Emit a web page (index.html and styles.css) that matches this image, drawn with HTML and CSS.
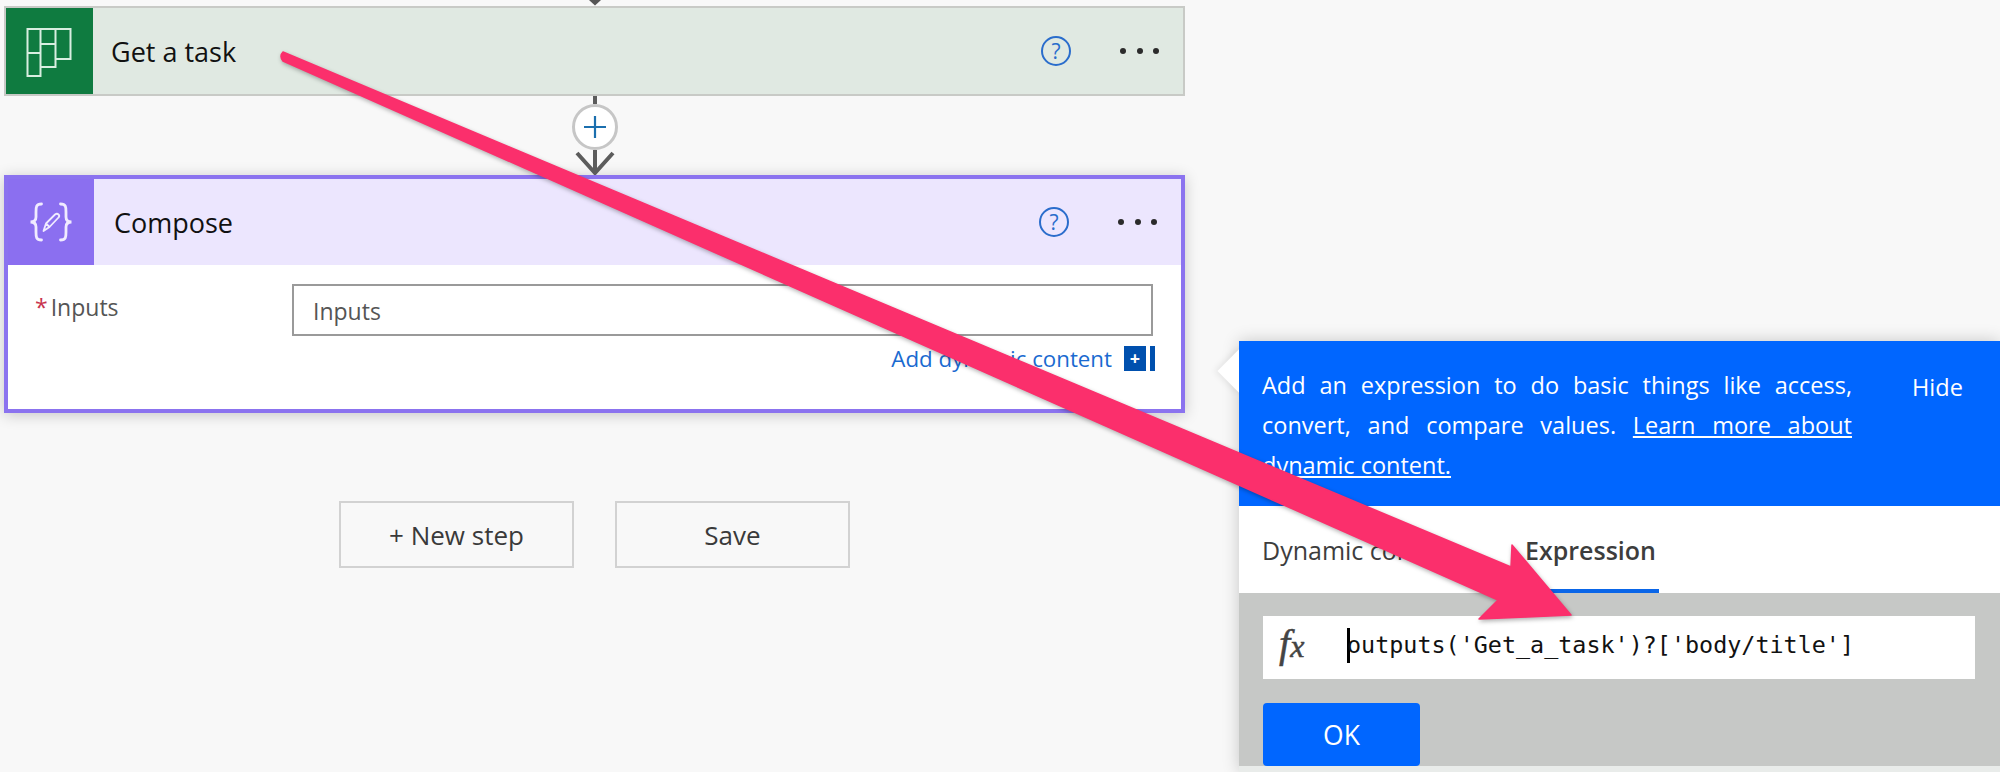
FILE: index.html
```html
<!DOCTYPE html>
<html lang="en">
<head>
<meta charset="utf-8">
<title>Compose expression</title>
<link rel="stylesheet" href="styles.css">
</head>
<body>
<div class="page">
  <main class="canvas">
    <svg class="top-tip" width="20" height="6" viewBox="0 0 20 6"><path d="M4 0 L10 5.500 L16 0 Z" fill="#555"/></svg>
    <section class="card card-task">
      <div class="card-icon icon-task">
        <svg width="87" height="87" viewBox="0 0 87 87" fill="none" stroke="#d8eee0" stroke-width="2">
          <path d="M21.500 21h13v47h-13zM21.500 45h13M34.500 21h15v38h-15M34.500 36h15M49.500 21h15v30h-15"/>
        </svg>
      </div>
      <h2 class="card-title">Get a task</h2>
      <span class="help">?</span>
      <span class="dots"><i></i><i></i><i></i></span>
    </section>
    <div class="connector">
      <span class="stem"></span>
      <span class="add"><svg width="22" height="22" viewBox="0 0 22 22"><path d="M11 0v22M0 11h22" stroke="#1b6fae" stroke-width="2.200"/></svg></span>
      <svg class="arrow-down" width="44" height="25" viewBox="0 0 44 25" fill="none" stroke="#5c5c5c" stroke-width="4"><path d="M22 0V23M4 3L22 23L40 3"/></svg>
    </div>
    <section class="card card-compose">
      <header class="compose-head">
        <div class="card-icon icon-compose">
          <svg width="86" height="86" viewBox="0 0 86 86" fill="none" stroke="#f0ebff" stroke-width="2.800" stroke-linecap="round">
            <path d="M33.500 25C28 25 28 28 28 33V38C28 41 26 43 22.500 43C26 43 28 45 28 48V53C28 58 28 61 33.500 61"/>
            <path d="M52.500 25C58 25 58 28 58 33V38C58 41 60 43 63.500 43C60 43 58 45 58 48V53C58 58 58 61 52.500 61"/>
            <path d="M35.500 52L38 44.500L47 35.500Q49 34 50.500 35.500Q52 37 50.500 38.500L41.500 48ZM38 44.500L41.500 48" stroke-width="1.800" stroke-linejoin="round"/>
          </svg>
        </div>
        <h2 class="card-title title-compose">Compose</h2>
        <span class="help">?</span>
        <span class="dots"><i></i><i></i><i></i></span>
      </header>
      <div class="compose-body">
        <div class="field">
          <label class="field-label"><span class="star">*</span>Inputs</label>
          <div class="field-input">Inputs</div>
        </div>
        <div class="dyn-row">
          <a class="dyn-link">Add dynamic content</a>
          <span class="dyn-plus">+</span>
          <span class="dyn-bar"></span>
        </div>
      </div>
    </section>
    <div class="actions">
      <button class="btn">+ New step</button>
      <button class="btn">Save</button>
    </div>
  </main>
  <aside class="panel">
    <span class="notch"></span>
    <div class="panel-info">
      <p class="info-text">
        <span class="line">Add an expression to do basic things like access,</span>
        <span class="line">convert, and compare values. <u>Learn more about</u></span>
        <span class="line last"><u>dynamic content.</u></span>
      </p>
      <span class="hide">Hide</span>
    </div>
    <div class="tabs">
      <span class="tab tab-dyn">Dynamic content</span>
      <span class="tab tab-expr">Expression</span>
    </div>
    <div class="expr-zone">
      <div class="expr-input">
        <span class="fx">f<span class="fx-x">x</span></span>
        <span class="caret"></span>
        <code class="expr-code">outputs('Get_a_task')?['body/title']</code>
      </div>
      <button class="ok">OK</button>
    </div>
    <div class="panel-foot"></div>
  </aside>
</div>
<svg class="callout" width="2000" height="772" viewBox="0 0 2000 772">
  <path d="M283 52 L1511 567 L1512 545 L1571 615 L1479 619 L1498 600 L283 61 Q279 56 283 52 Z" fill="#fb2f6c" stroke="#fb2f6c" stroke-width="1.500" stroke-linejoin="round"/>
</svg>
</body>
</html>
```
FILE: styles.css
```css
* { box-sizing: border-box; }
html, body { margin: 0; height: 100%; }
body {
  background: #f8f8f8;
  font-family: "Open Sans", "Noto Sans", sans-serif;
  overflow: hidden;
  position: relative;
}
.page { display: flex; height: 772px; overflow: hidden; }
.canvas { width: 1239px; flex: none; padding-left: 4px; }
.canvas > * { width: 1181px; }
.top-tip { display: block; margin-left: 581px; width: 20px; height: 6px; }

.card { display: flex; align-items: center; }
.card-task { height: 90px; background: #e0e9e2; border: 2px solid #c8cac6; padding-right: 24px; }
.card-icon { flex: none; display: flex; }
.icon-task { width: 87px; height: 86px; background: #0f7b40; }
.card-title { flex: 1; margin: 2px 0 0 18px; font-size: 27px; font-weight: 400; color: #111; line-height: 34px; }
.title-compose { margin-left: 20px; }
.help {
  width: 30px; height: 30px; border-radius: 50%; border: 2px solid #2a6dcc; color: #2a6dcc;
  font-size: 21px; line-height: 26px; text-align: center; flex: none;
}
.dots { display: flex; gap: 10.5px; margin-left: 49px; flex: none; }
.dots i { width: 6px; height: 6px; border-radius: 50%; background: #2b2b2b; display: block; }

.connector { height: 79px; display: flex; flex-direction: column; align-items: center; position: relative; z-index: 2; }
.stem { width: 4px; height: 8px; background: #5c5c5c; flex: none; }
.add {
  width: 46px; height: 46px; border-radius: 50%; background: #fff; border: 3px solid #c6c6c6;
  display: flex; align-items: center; justify-content: center; flex: none;
}
.arrow-down { flex: none; display: block; }

.card-compose {
  display: block; height: 238px; background: #fff; border: 4px solid #8b73ef;
  box-shadow: 0 2px 14px rgba(0,0,0,.2);
}
.compose-head { display: flex; align-items: center; height: 86px; background: #ece6fe; padding-right: 24px; }
.icon-compose { width: 86px; height: 86px; background: #8b6ff0; }
.compose-body { padding: 19px 26px 0 27px; }
.field { display: flex; }
.field-label { width: 257px; flex: none; font-size: 23px; color: #555; line-height: 40px; margin-top: 3px; height: 40px; }
.star { color: #c8334e; margin-right: 3px; }
.field-input {
  width: 861px; height: 52px; border: 2px solid #9a9a9a; background: #fff; color: #555;
  font-size: 23px; line-height: 50px; padding-left: 19px;
}
.dyn-row { display: flex; justify-content: flex-end; align-items: center; margin-top: 10px; height: 25px; }
.dyn-link { color: #1a6ad0; font-size: 22.300px; line-height: 25px; }
.dyn-plus {
  width: 22px; height: 25px; background: #0050ae; color: #fff; margin-left: 12px;
  font-size: 18px; font-weight: 700; line-height: 24px; text-align: center;
}
.dyn-bar { width: 5px; height: 25px; background: #0050ae; margin-left: 4px; }

.actions { display: flex; justify-content: center; gap: 41px; margin-top: 88px; }
.btn {
  width: 235px; height: 67px; background: #f8f8f8; border: 2px solid #d2d2d2; color: #3a3a3a;
  font: inherit; font-size: 26px; padding-top: 2px;
}

.panel { width: 761px; flex: none; margin-top: 341px; background: #fff; position: relative; box-shadow: 0 0 16px rgba(0,0,0,.2); height: 431px; }
.notch {
  position: absolute; left: -15px; top: 15px; width: 30px; height: 30px; background: #fff;
  transform: rotate(45deg) scale(1.02); box-shadow: -2px 2px 6px rgba(0,0,0,.08);
}
.panel-info {
  position: relative; display: flex; height: 165px; background: #0066ff; color: #fff;
  padding: 24px 0 0 23px; font-size: 23.500px; line-height: 40px;
}
.info-text { width: 590px; margin: 0; flex: none; }
.line { display: block; text-align: justify; text-align-last: justify; }
.line.last { text-align-last: left; }
.hide { margin-left: 60px; margin-top: 2px; }
.tabs { height: 87px; display: flex; padding-left: 23px; background: #fff; position: relative; }
.tab { font-size: 25px; color: #3d3d3d; line-height: 88px; flex: none; }
.tab-dyn { width: 254px; }
.tab-expr { width: 143px; padding-left: 9px; font-weight: 600; border-bottom: 4px solid #0a66e8; }
.expr-zone { height: 173px; background: #c6c8c6; padding: 23px 25px 0 24px; }
.expr-input { height: 63px; background: #fff; display: flex; align-items: center; padding: 0 0 5px 16px; }
.fx { width: 68px; flex: none; font-family: "Liberation Serif", serif; font-style: italic; font-size: 40px; color: #444; line-height: 60px; -webkit-text-stroke: 0.5px #444; }
.fx-x { font-size: 32px; }
.caret { width: 3px; height: 35px; background: #000; flex: none; margin-right: -3px; }
.expr-code { font-family: "DejaVu Sans Mono", monospace; font-size: 23.400px; color: #111; white-space: nowrap; }
.ok {
  display: block; width: 157px; height: 63px; margin-top: 24px; background: #0066ff; color: #fff; border: 0;
  border-radius: 4px; font: inherit; font-size: 26.500px;
}
.panel-foot { height: 6px; background: #e9ecea; }

.callout { position: absolute; left: 0; top: 0; z-index: 5; filter: drop-shadow(1px 2px 2px rgba(0,0,0,.3)); pointer-events: none; }
```
